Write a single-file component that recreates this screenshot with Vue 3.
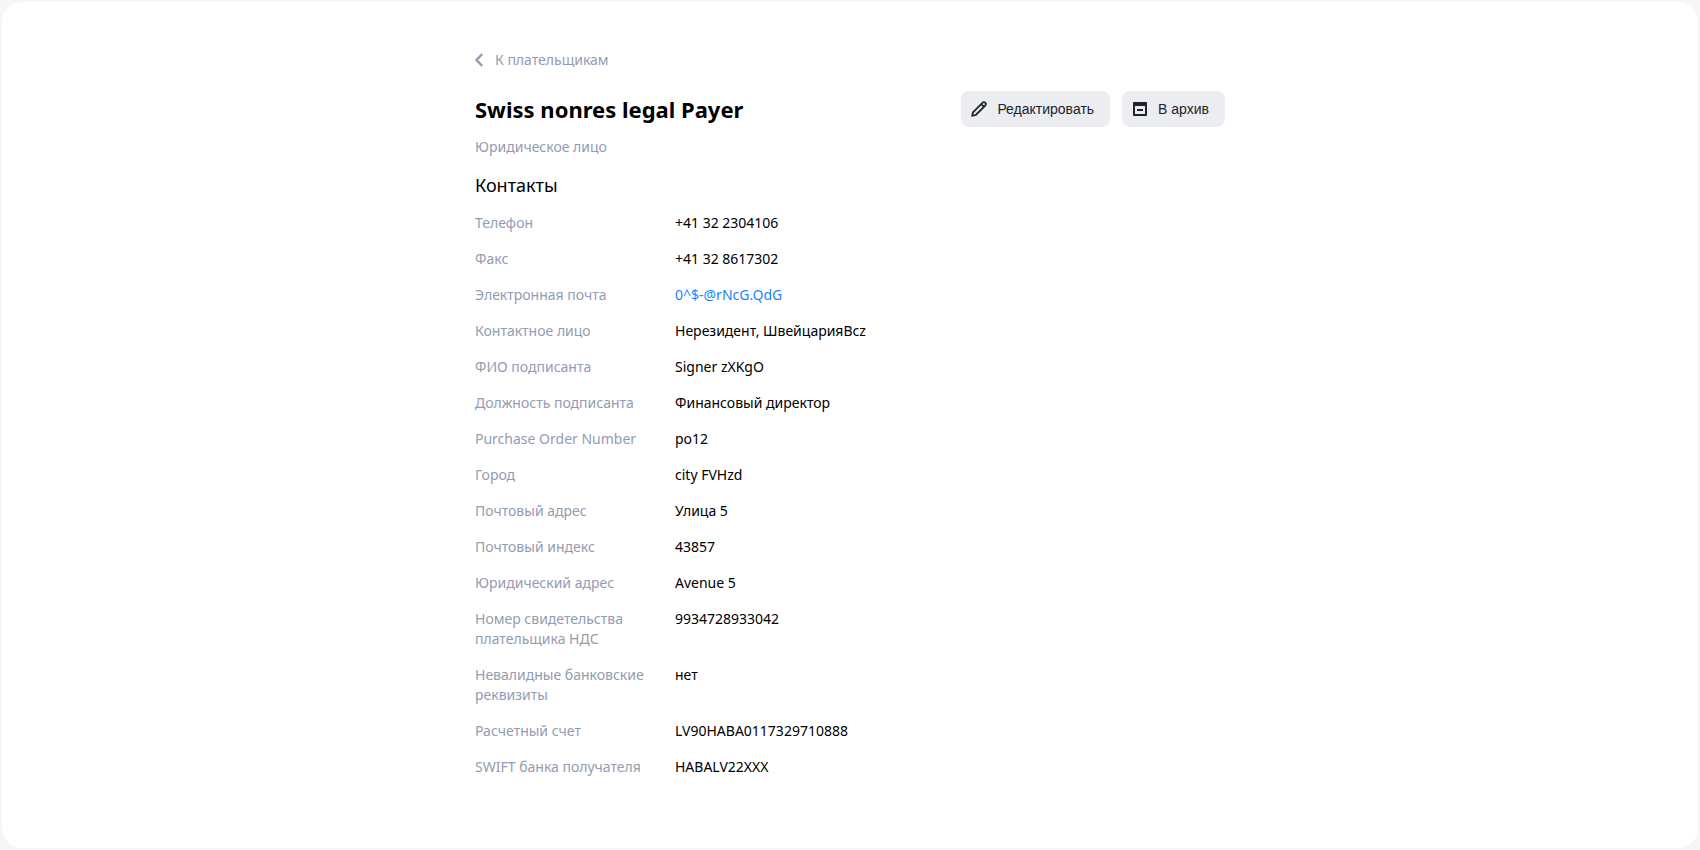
<script setup>
const rows = [
  { label: 'Телефон', value: '+41 32 2304106' },
  { label: 'Факс', value: '+41 32 8617302' },
  { label: 'Электронная почта', value: '0^$-@rNcG.QdG', email: true },
  { label: 'Контактное лицо', value: 'Нерезидент, ШвейцарияBcz' },
  { label: 'ФИО подписанта', value: 'Signer zXKgO' },
  { label: 'Должность подписанта', value: 'Финансовый директор' },
  { label: 'Purchase Order Number', value: 'po12' },
  { label: 'Город', value: 'city FVHzd' },
  { label: 'Почтовый адрес', value: 'Улица 5' },
  { label: 'Почтовый индекс', value: '43857' },
  { label: 'Юридический адрес', value: 'Avenue 5' },
  { label: 'Номер свидетельства плательщика НДС', value: '9934728933042' },
  { label: 'Невалидные банковские реквизиты', value: 'нет' },
  { label: 'Расчетный счет', value: 'LV90HABA0117329710888' },
  { label: 'SWIFT банка получателя', value: 'HABALV22XXX' },
]
</script>

<template>
  <div class="page">
    <main class="card">
      <div class="content">
        <a class="back" href="#">
          <svg class="chevron" width="8" height="14" viewBox="0 0 8 14" aria-hidden="true">
            <path d="M7.2 1.2 1.5 7 7.2 12.8" fill="none" stroke="currentColor" stroke-width="2.4" />
          </svg>
          К плательщикам
        </a>

        <header class="header">
          <h1 class="title">Swiss nonres legal Payer</h1>
          <div class="actions">
            <button class="button" type="button">
              <svg width="16" height="16" viewBox="0 0 16 16" aria-hidden="true">
                <path d="M1.1 14.9 2 11.3 11.4 1.8Q12.9.5 14.3 1.7 15.5 3.1 14.2 4.6L4.7 14ZM10.2 3 13 5.8" fill="none" stroke="currentColor" stroke-width="1.8" stroke-linejoin="round" />
              </svg>
              Редактировать
            </button>
            <button class="button" type="button">
              <svg width="16" height="16" viewBox="0 0 16 16" aria-hidden="true">
                <path fill="currentColor" fill-rule="evenodd" d="M2 1H14Q15 1 15 2V14Q15 15 14 15H2Q1 15 1 14V2Q1 1 2 1ZM3 5V13H13V5ZM5 8H11V10H5Z" />
              </svg>
              В архив
            </button>
          </div>
        </header>

        <p class="kind">Юридическое лицо</p>

        <h2 class="subtitle">Контакты</h2>
        <dl class="details">
          <div v-for="row in rows" :key="row.label" class="row">
            <dt class="label">{{ row.label }}</dt>
            <dd class="value">
              <a v-if="row.email" class="email" :href="'mailto:' + row.value">{{ row.value }}</a>
              <template v-else>{{ row.value }}</template>
            </dd>
          </div>
        </dl>
      </div>
    </main>
  </div>
</template>

<style>
body {
  background: #f5f6f7;
}
</style>

<style scoped>
.page {
  box-sizing: border-box;
  display: flex;
  min-height: 100vh;
  padding: 2px;
  background: #f5f6f7;
  color: #000;
  font: 14px/20px "Noto Sans", "Open Sans", sans-serif;
}
.card {
  box-sizing: border-box;
  flex: 1;
  padding: 48px 24px;
  border-radius: 20px;
  background: #fff;
}
.content {
  max-width: 750px;
  margin: 0 auto;
}
.back {
  display: flex;
  align-items: center;
  gap: 12px;
  width: fit-content;
  color: #939cb0;
  text-decoration: none;
}
.header {
  display: flex;
  align-items: center;
  justify-content: space-between;
  gap: 12px;
  margin-top: 21px;
}
.title {
  margin: 0;
  font-size: 22px;
  line-height: 32px;
  font-weight: 700;
}
.actions {
  display: flex;
  gap: 12px;
}
.button {
  display: flex;
  align-items: center;
  gap: 10px;
  height: 36px;
  padding: 0 16px 0 10px;
  border: 0;
  border-radius: 8px;
  background: #ecedf1;
  color: #21222e;
  font: 14px/20px "Liberation Sans", Arial, sans-serif;
  cursor: pointer;
}
.kind {
  margin: 10px 0 0;
  color: #939cb0;
}
.subtitle {
  margin: 16px 0 0;
  font-size: 18px;
  line-height: 24px;
  font-weight: 400;
}
.details {
  display: flex;
  flex-direction: column;
  gap: 16px;
  margin: 16px 0 0;
}
.row {
  display: grid;
  grid-template-columns: 176px 1fr;
  column-gap: 24px;
}
.label {
  color: #939cb0;
}
.value {
  margin: 0;
}
.email {
  color: #1a85ff;
  text-decoration: none;
}
</style>
